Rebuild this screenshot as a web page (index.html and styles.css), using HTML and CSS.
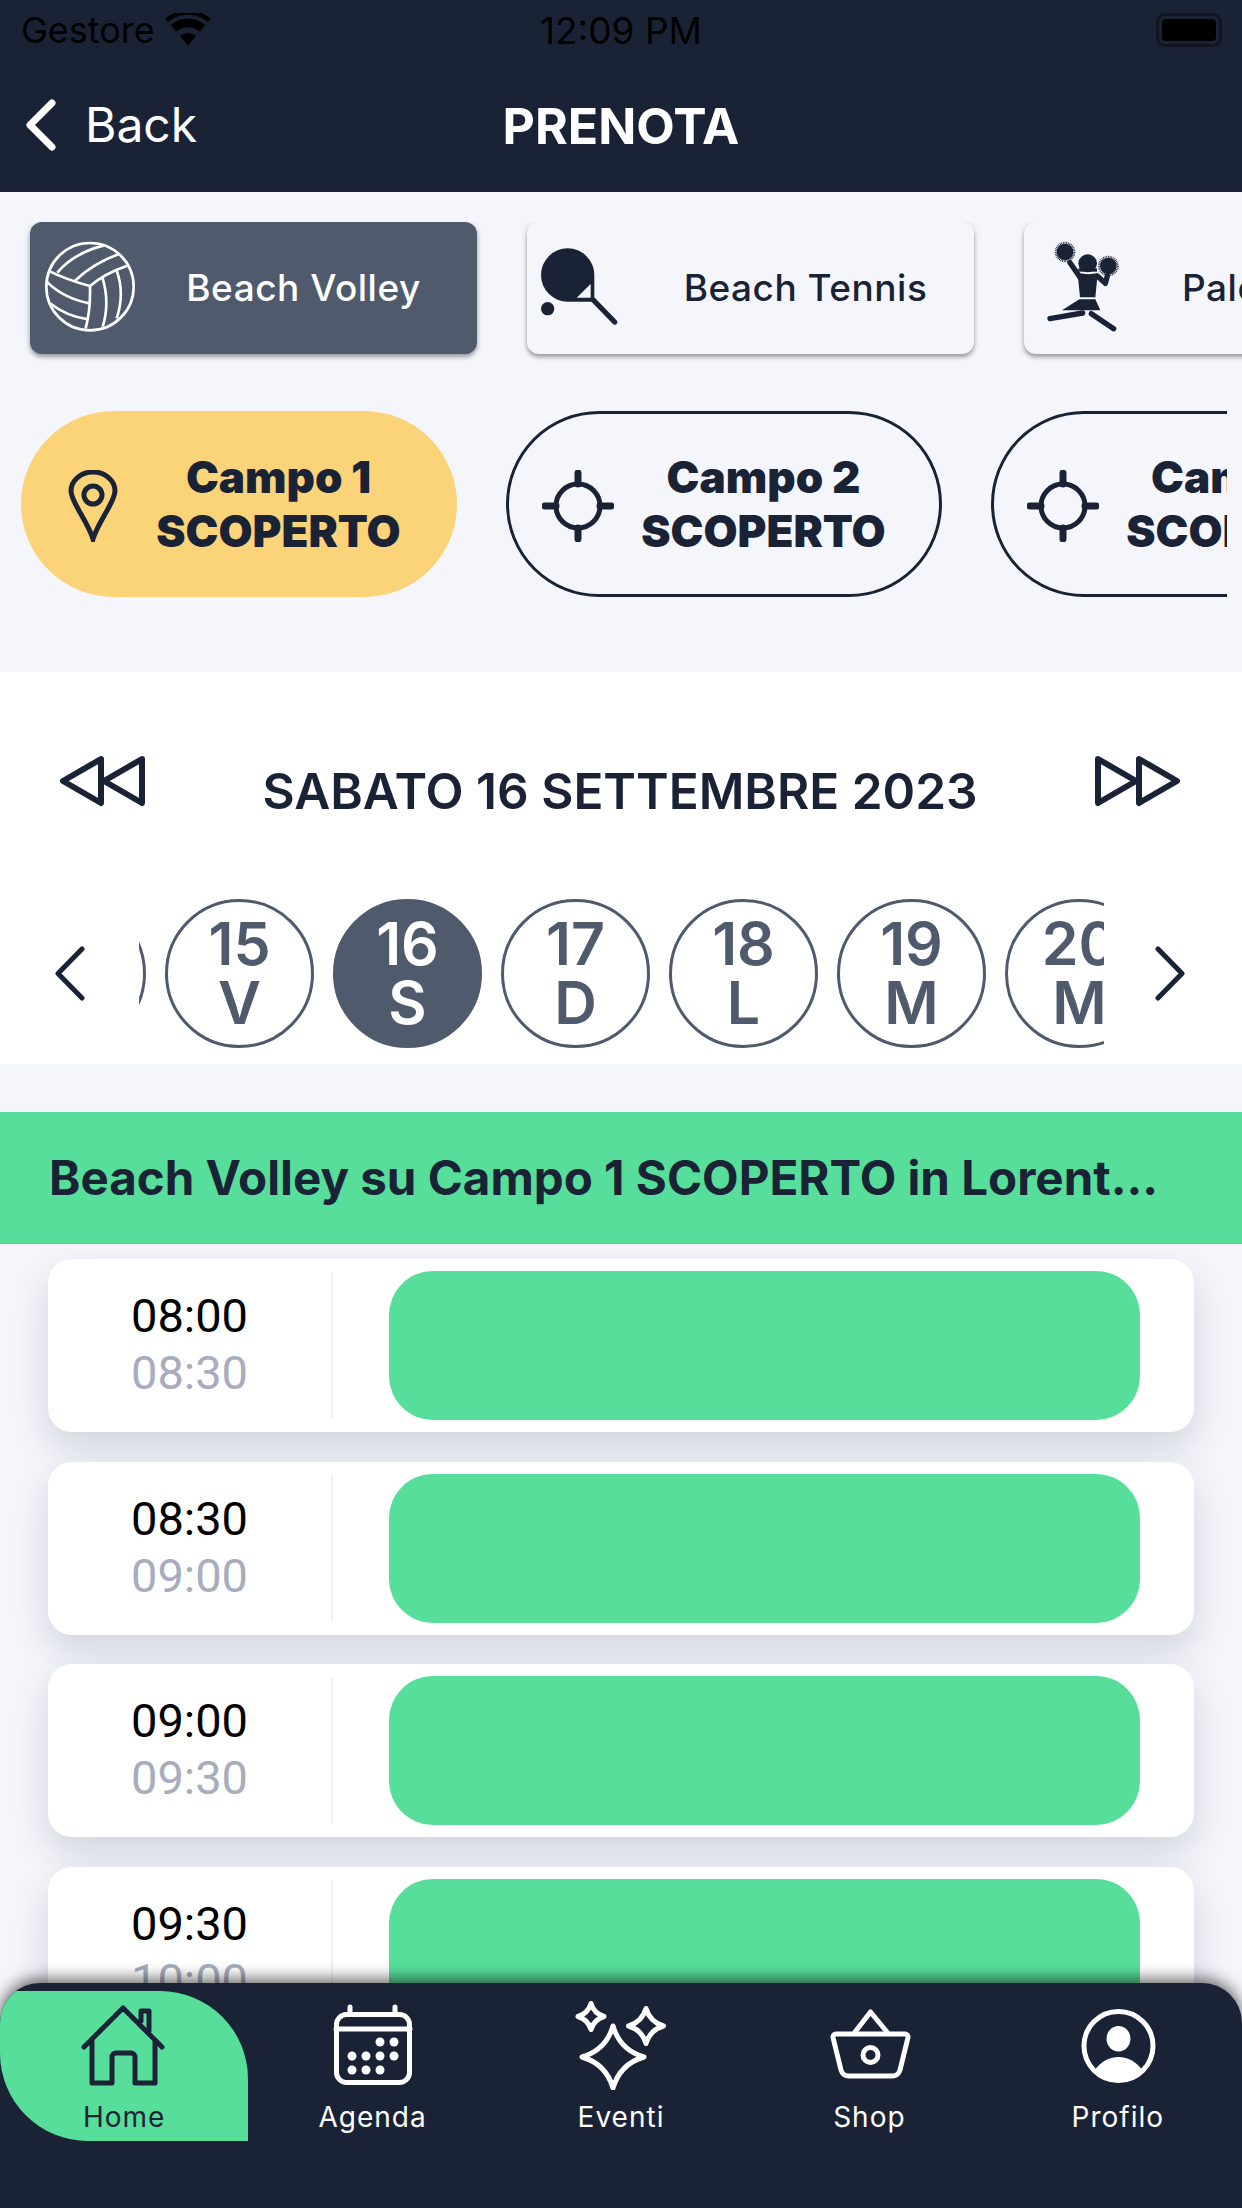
FILE: index.html
```html
<!DOCTYPE html>
<html lang="it">
<head>
  <meta charset="UTF-8">
  <meta name="viewport" content="width=device-width, initial-scale=1.0">
  <title>Prenota</title>
  <link rel="stylesheet" href="styles.css">
</head>
<body>
  <div class="app">
    <header class="top">
      <div class="status">
        <div class="status-left">
          <span>Gestore</span>
          <svg class="wifi" viewBox="0 0 46 33"><path d="M23 33 15 23a12 12 0 0 1 16 0Z"/><path d="M11 18.500 5.500 12a27 27 0 0 1 35 0L35 18.500a19 19 0 0 0-24 0Z"/><path d="M3 9 0 5.500a36 36 0 0 1 46 0L43 9a31 31 0 0 0-40 0Z"/></svg>
        </div>
        <span class="status-time">12:09 PM</span>
        <div class="battery"><i></i></div>
      </div>
      <div class="navbar">
        <div class="back">
          <svg class="back-arrow" viewBox="0 0 31 52"><path d="M27 4 5 26l22 22"/></svg>
          <span>Back</span>
        </div>
        <h1>PRENOTA</h1>
      </div>
    </header>

    <section class="filters">
      <div class="sports">
        <div class="sport active">
          <svg class="sport-icon line" viewBox="60 84 300 300">
            <circle cx="210" cy="230" r="131"/>
            <path d="M112 188Q160 130 250 107M165 212Q220 160 295 133M85 182Q140 210 210 228M210 228Q255 190 320 168M210 228Q212 300 197 355M80 215Q130 265 208 280M90 280Q140 320 205 328M248 205Q270 280 248 350M290 182Q315 250 290 325"/>
          </svg>
          <span>Beach Volley</span>
        </div>
        <div class="sport">
          <svg class="sport-icon" viewBox="51 84 300 300">
            <path d="M143 115A80 80 0 0 1 223 195V275H143A80 80 0 0 1 143 115Z"/>
            <path class="cut" d="M170 263 212 222V263Z"/>
            <path class="handle" d="M220 270 284 336"/>
            <circle cx="83" cy="296" r="20"/>
          </svg>
          <span>Beach Tennis</span>
        </div>
        <div class="sport">
          <svg class="sport-icon" viewBox="42 54 300 300">
            <circle cx="135" cy="96" r="25"/>
            <circle class="fringe" cx="135" cy="96" r="28"/>
            <circle cx="265" cy="138" r="25"/>
            <circle class="fringe" cx="265" cy="138" r="28"/>
            <ellipse cx="203" cy="130" rx="28" ry="27"/>
            <path d="M175 155h56v-10h-56Z"/>
            <path d="M178 160 205 163 232 160 232 172 226 232H180L174 172Z"/>
            <path class="handle" d="M150 128 184 178M232 168 256 190 262 168"/>
            <path d="M126 271 178 238H226L241 271Z"/>
            <path class="handle" d="M90 296 188 279M214 281 281 326"/>
          </svg>
          <span>Palestra Gym</span>
        </div>
      </div>

      <div class="fields">
        <div class="field active">
          <svg class="field-icon" viewBox="0 0 72 72"><path d="M36 69C30 50 14 32 14 21a22 19 0 0 1 44 0C58 32 42 50 36 69Z"/><circle cx="36" cy="25" r="9"/></svg>
          <p>Campo 1<br>SCOPERTO</p>
        </div>
        <div class="field">
          <svg class="field-icon" viewBox="0 0 72 72"><circle cx="36" cy="36" r="22"/><path class="tick" d="M36 3V14M36 58V69M3 36H14M58 36H69"/></svg>
          <p>Campo 2<br>SCOPERTO</p>
        </div>
        <div class="field">
          <svg class="field-icon" viewBox="0 0 72 72"><circle cx="36" cy="36" r="22"/><path class="tick" d="M36 3V14M36 58V69M3 36H14M58 36H69"/></svg>
          <p>Campo 3<br>SCOPERTO</p>
        </div>
      </div>
    </section>

    <section class="calendar">
      <div class="month-row">
        <svg class="skip" viewBox="0 0 86 52"><path d="M41 4 3 26l38 22ZM82 4 44 26l38 22Z"/></svg>
        <h2>SABATO 16 SETTEMBRE 2023</h2>
        <svg class="skip" viewBox="0 0 86 52"><path d="M4 4 42 26 4 48ZM45 4 83 26 45 48Z"/></svg>
      </div>
      <div class="days-row">
        <svg class="day-arrow" viewBox="0 0 31 55"><path d="M28 3 4 27.500 28 52"/></svg>
        <div class="days">
          <div class="days-track">
            <div class="day">14<br>G</div>
            <div class="day">15<br>V</div>
            <div class="day selected">16<br>S</div>
            <div class="day">17<br>D</div>
            <div class="day">18<br>L</div>
            <div class="day">19<br>M</div>
            <div class="day">20<br>M</div>
          </div>
        </div>
        <svg class="day-arrow" viewBox="0 0 31 55"><path d="M3 3 27 27.500 3 52"/></svg>
      </div>
    </section>

    <div class="band">Beach Volley su Campo 1 SCOPERTO in Lorent...</div>

    <div class="slots">
      <div class="slot">
        <div class="slot-time"><b>08:00</b><span>08:30</span></div>
        <div class="slot-free"></div>
      </div>
      <div class="slot">
        <div class="slot-time"><b>08:30</b><span>09:00</span></div>
        <div class="slot-free"></div>
      </div>
      <div class="slot">
        <div class="slot-time"><b>09:00</b><span>09:30</span></div>
        <div class="slot-free"></div>
      </div>
      <div class="slot">
        <div class="slot-time"><b>09:30</b><span>10:00</span></div>
        <div class="slot-free"></div>
      </div>
    </div>

    <nav class="tabs">
      <div class="tab current">
        <svg viewBox="0 -4 96 90"><path d="M8 43 47 4 86 43M16 36V79H36V53a4 4 0 0 1 4-4H55a4 4 0 0 1 4 4V79H79V36M65 17V7H73V27"/></svg>
        <span>Home</span>
      </div>
      <div class="tab">
        <svg viewBox="0 -4 96 90">
          <rect x="11.500" y="10.500" width="73" height="68" rx="10"/>
          <path d="M11 25H85M25 3V10M70 3V10"/>
          <g class="dots">
            <circle cx="55" cy="38" r="4.500"/><circle cx="69" cy="38" r="4.500"/>
            <circle cx="27" cy="52" r="4.500"/><circle cx="41" cy="52" r="4.500"/><circle cx="55" cy="52" r="4.500"/><circle cx="69" cy="52" r="4.500"/>
            <circle cx="27" cy="66" r="4.500"/><circle cx="41" cy="66" r="4.500"/><circle cx="55" cy="66" r="4.500"/>
          </g>
        </svg>
        <span>Agenda</span>
      </div>
      <div class="tab">
        <svg viewBox="0 -4 96 90"><path d="M40 22Q47 46 71 53 47 60 40 84 33 60 9 53 33 46 40 22ZM18 -0.500Q21 9.500 31 12.500 21 15.500 18 25.500 15 15.500 5 12.500 15 9.500 18 -0.500ZM73 4.500Q77 18 90.500 22 77 26 73 39.500 69 26 55.500 22 69 18 73 4.500Z"/></svg>
        <span>Eventi</span>
      </div>
      <div class="tab">
        <svg viewBox="0 -4 96 90">
          <path d="M15 30H84a3 3 0 0 1 3 3.500L79 66a8 8 0 0 1-8 6H28a8 8 0 0 1-8-6L12 33.500a3 3 0 0 1 3-3.500Z"/>
          <path d="M34 28 49.500 8 66 28"/>
          <circle cx="49.500" cy="51" r="7.500"/>
        </svg>
        <span>Shop</span>
      </div>
      <div class="tab">
        <svg viewBox="0 -4 96 90">
          <circle cx="48.500" cy="42" r="34.500"/>
          <g class="dots">
            <ellipse cx="48.500" cy="34.700" rx="12" ry="12.700"/>
            <path d="M24 67Q34 53 48.500 53 63 53 73 67A34.500 34.500 0 0 1 24 67Z"/>
          </g>
        </svg>
        <span>Profilo</span>
      </div>
    </nav>
  </div>
</body>
</html>
```

FILE: styles.css
```css
* {
  box-sizing: border-box;
}
body {
  margin: 0;
  background: #f4f6fb;
  font-family: "Inter", "Liberation Sans", sans-serif;
  color: #1a2335;
}
.app {
  position: relative;
  width: 1242px;
  height: 2208px;
  overflow: hidden;
}

/* top bar */
.top {
  background: #1a2335;
  height: 192px;
}
.status {
  height: 60px;
  padding: 0 20px 0 21px;
  display: flex;
  align-items: center;
  justify-content: space-between;
  color: #000;
  font-size: 36px;
  position: relative;
}
.status-left {
  display: flex;
  align-items: center;
  gap: 10px;
}
.wifi {
  width: 46px;
  height: 33px;
  margin-top: -2px;
}
.status-time {
  position: absolute;
  left: 0;
  right: 0;
  text-align: center;
  font-size: 37px;
}
.battery {
  width: 66px;
  height: 34px;
  border: 3px solid #10151f;
  border-radius: 9px;
  padding: 3px;
}
.battery i {
  display: block;
  height: 100%;
  background: #000;
  border-radius: 4px;
}
.navbar {
  height: 132px;
  position: relative;
  display: flex;
  align-items: center;
  justify-content: center;
  color: #fff;
}
.back {
  position: absolute;
  left: 25px;
  top: 35px;
  display: flex;
  align-items: center;
  gap: 29px;
  font-size: 48px;
  font-weight: 400;
}
.back-arrow {
  width: 31px;
  height: 52px;
  fill: none;
  stroke: #fff;
  stroke-width: 7;
  stroke-linecap: round;
  stroke-linejoin: round;
}
.navbar h1 {
  margin: 0;
  font-size: 50px;
  font-weight: 700;
}

/* sport and field filters */
.filters {
  height: 480px;
  padding-top: 30px;
}
.sports {
  display: flex;
  gap: 50px;
  padding-left: 30px;
  overflow: hidden;
  height: 150px;
}
.sport {
  flex: 0 0 447px;
  height: 132px;
  border-radius: 12px;
  background: #f4f6fb;
  box-shadow: 0 3px 4px rgba(0,0,0,0.35), 0 0 10px rgba(30,40,70,0.08);
  padding-left: 10px;
  display: flex;
  align-items: center;
  font-size: 37px;
  font-weight: 500;
  letter-spacing: 0.5px;
}
.sport span {
  flex: 1;
  margin-top: -2px;
  text-align: center;
  white-space: nowrap;
}
.sport.active {
  background: #4f5b6c;
  color: #fff;
}
.sport.active span {
  padding-right: 10px;
}
.sport-icon {
  flex: 0 0 100px;
  height: 100px;
  fill: #1a2335;
}
.sport-icon.line {
  fill: none;
  stroke: #fff;
  stroke-width: 8;
}
.sport-icon .cut {
  fill: #f4f6fb;
}
.sport-icon .handle {
  fill: none;
  stroke: #1a2335;
  stroke-width: 16;
  stroke-linecap: round;
  stroke-linejoin: round;
}
.sport-icon .fringe {
  fill: none;
  stroke: #1a2335;
  stroke-width: 6;
  stroke-dasharray: 2.500 2.500;
}
.fields {
  display: flex;
  gap: 49px;
  margin-top: 39px;
  padding-left: 21px;
  width: 1227px;
  overflow: hidden;
}
.field {
  flex: 0 0 436px;
  height: 186px;
  border-radius: 93px;
  border: 3px solid #1a2335;
  display: flex;
  align-items: center;
  padding-left: 33px;
}
.field.active {
  background: #fbd379;
  border-color: #fbd379;
}
.field p {
  margin: 0;
  flex: 1;
  padding-right: 26px;
  text-align: center;
  font-size: 44px;
  line-height: 54px;
  font-weight: 900;
  white-space: nowrap;
}
.field-icon {
  flex: 0 0 72px;
  height: 72px;
  margin-top: 3px;
  fill: none;
  stroke: #1a2335;
  stroke-width: 5;
}
.field-icon .tick {
  stroke-width: 7;
  stroke-linecap: round;
}

/* calendar */
.calendar {
  background: #fff;
  height: 392px;
  padding-top: 83px;
}
.month-row {
  display: flex;
  justify-content: space-between;
  padding: 0 62px 0 60px;
  height: 62px;
}
.month-row h2 {
  margin: 10px 0 0;
  font-size: 49.500px;
  line-height: 52px;
  font-weight: 600;
}
.skip {
  width: 86px;
  height: 52px;
  fill: none;
  stroke: #1a2335;
  stroke-width: 6;
  stroke-linejoin: round;
}
.days-row {
  display: flex;
  align-items: center;
  margin-top: 82px;
  padding-left: 54px;
}
.day-arrow {
  flex: 0 0 31px;
  height: 55px;
  fill: none;
  stroke: #1a2335;
  stroke-width: 5;
  stroke-linecap: round;
  stroke-linejoin: round;
}
.days {
  flex: 0 0 965px;
  margin: 0 51px 0 54px;
  overflow: hidden;
}
.days-track {
  display: flex;
  gap: 19px;
  margin-left: -142px;
}
.day {
  flex: 0 0 149px;
  height: 149px;
  border-radius: 50%;
  border: 3px solid #4f5b6c;
  color: #4f5b6c;
  text-align: center;
  font-size: 59px;
  line-height: 59px;
  font-weight: 600;
  padding-top: 12px;
}
.day.selected {
  background: #4f5b6c;
  color: #fff;
}

/* slot list */
.band {
  margin-top: 48px;
  height: 132px;
  background: #57de9b;
  padding-left: 49px;
  font-size: 47.500px;
  line-height: 132px;
  font-weight: 700;
  white-space: nowrap;
  border-bottom: 1px solid #7fc384;
}
.slots {
  padding: 15px 48px 0;
  display: flex;
  flex-direction: column;
  gap: 29.700px;
}
.slot {
  flex: 0 0 173px;
  background: #fff;
  border-radius: 24px;
  box-shadow: 0 16px 36px rgba(30,40,70,0.16);
  padding-right: 54px;
  display: flex;
  align-items: center;
}
.slot-time {
  flex: 0 0 285px;
  height: 145px;
  padding-bottom: 3px;
  border-right: 2px solid #eef0f5;
  display: flex;
  flex-direction: column;
  align-items: center;
  justify-content: center;
  font-family: "Roboto", sans-serif;
  font-size: 47px;
  line-height: 57px;
}
.slot-time b {
  font-weight: 400;
  color: #000;
}
.slot-time span {
  color: #a7acbf;
}
.slot-free {
  flex: 1;
  height: 149px;
  margin-left: 56px;
  background: #57de9b;
  border-radius: 44px;
}

/* bottom tabs */
.tabs {
  position: absolute;
  left: 0;
  right: 0;
  bottom: 0;
  height: 225px;
  background: #1a2335;
  border-radius: 40px 40px 0 0;
  box-shadow: 0 -4px 16px rgba(0,0,0,0.6);
  display: grid;
  grid-template-columns: repeat(5, 1fr);
  align-items: start;
  padding-top: 8px;
  overflow: hidden;
}
.tab {
  height: 150px;
  padding-top: 9px;
  display: flex;
  flex-direction: column;
  align-items: center;
  color: #fff;
  font-size: 28px;
  line-height: 34px;
  letter-spacing: 1px;
}
.tab svg {
  width: 96px;
  height: 90px;
  margin-bottom: 10px;
  fill: none;
  stroke: #fff;
  stroke-width: 5;
  stroke-linecap: round;
  stroke-linejoin: round;
}
.tab .dots {
  fill: #fff;
  stroke: none;
}
.tab.current {
  background: #57de9b;
  color: #1a2335;
  border-radius: 0 88px 0 88px;
}
.tab.current svg {
  stroke: #1a2335;
}
```
